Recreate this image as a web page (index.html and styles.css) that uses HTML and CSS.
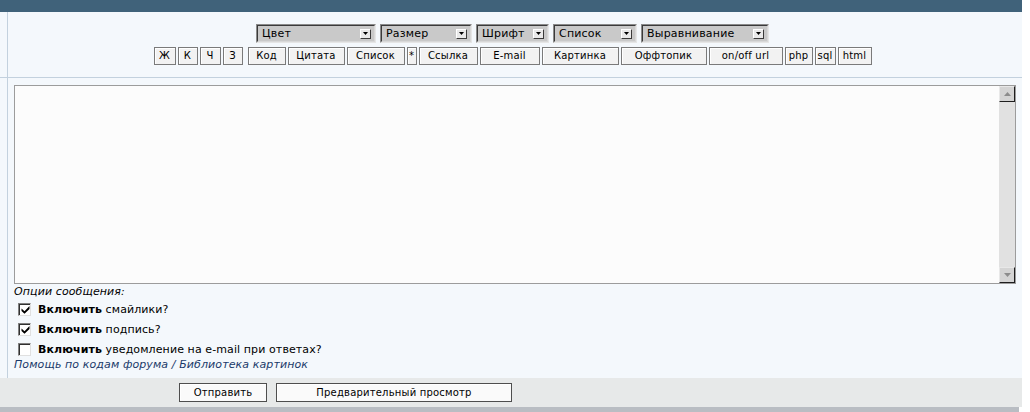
FILE: index.html
```html
<!DOCTYPE html>
<html lang="ru">
<head>
<meta charset="utf-8">
<title>Ответ</title>
<link rel="stylesheet" href="styles.css">
</head>
<body>
<div class="page">
  <div class="topbar"></div>
  <div class="row row-tools">
    <div class="side"></div>
    <div class="cell tools">
      <div class="selects">
        <div class="sel s-color"><div class="sel-in"><span class="sel-txt">Цвет</span><span class="arrow"><svg width="5" height="3" viewBox="0 0 5 3"><path d="M0 0H5L2.5 3Z" fill="#000"/></svg></span></div></div>
        <div class="sel s-size"><div class="sel-in"><span class="sel-txt">Размер</span><span class="arrow"><svg width="5" height="3" viewBox="0 0 5 3"><path d="M0 0H5L2.5 3Z" fill="#000"/></svg></span></div></div>
        <div class="sel s-font"><div class="sel-in"><span class="sel-txt">Шрифт</span><span class="arrow"><svg width="5" height="3" viewBox="0 0 5 3"><path d="M0 0H5L2.5 3Z" fill="#000"/></svg></span></div></div>
        <div class="sel s-list"><div class="sel-in"><span class="sel-txt">Список</span><span class="arrow"><svg width="5" height="3" viewBox="0 0 5 3"><path d="M0 0H5L2.5 3Z" fill="#000"/></svg></span></div></div>
        <div class="sel s-align"><div class="sel-in"><span class="sel-txt">Выравнивание</span><span class="arrow"><svg width="5" height="3" viewBox="0 0 5 3"><path d="M0 0H5L2.5 3Z" fill="#000"/></svg></span></div></div>
      </div>
      <div class="buttons">
        <button class="tb b-zh">Ж</button>
        <button class="tb b-k">К</button>
        <button class="tb b-ch">Ч</button>
        <button class="tb b-z">З</button>
        <button class="tb b-code">Код</button>
        <button class="tb b-quote">Цитата</button>
        <button class="tb b-list">Список</button>
        <button class="tb b-star">*</button>
        <button class="tb b-link">Ссылка</button>
        <button class="tb b-mail">E-mail</button>
        <button class="tb b-img">Картинка</button>
        <button class="tb b-off">Оффтопик</button>
        <button class="tb b-url">on/off url</button>
        <button class="tb b-php">php</button>
        <button class="tb b-sql">sql</button>
        <button class="tb b-html">html</button>
      </div>
    </div>
  </div>
  <div class="row row-body">
    <div class="side"></div>
    <div class="cell body">
      <div class="editor">
        <textarea class="text"></textarea>
        <div class="scroll">
          <div class="sbtn"><svg width="7" height="4" viewBox="0 0 7 4"><path d="M0 4H7L3.5 0Z" fill="#8c8c8c"/></svg></div>
          <div class="track"></div>
          <div class="sbtn"><svg width="7" height="4" viewBox="0 0 7 4"><path d="M0 0H7L3.5 4Z" fill="#8c8c8c"/></svg></div>
        </div>
      </div>
      <div class="opts-title">Опции сообщения:</div>
      <label class="opt"><span class="cb"><svg width="9" height="9" viewBox="0 0 9 9"><path d="M0.5 3.5L3.5 6.2L8.5 1V4L3.5 8.8L0.5 6Z" fill="#000"/></svg></span><b>Включить</b>&nbsp;смайлики?</label>
      <label class="opt"><span class="cb"><svg width="9" height="9" viewBox="0 0 9 9"><path d="M0.5 3.5L3.5 6.2L8.5 1V4L3.5 8.8L0.5 6Z" fill="#000"/></svg></span><b>Включить</b>&nbsp;подпись?</label>
      <label class="opt"><span class="cb"></span><b>Включить</b>&nbsp;уведомление на e-mail при ответах?</label>
      <div class="help"><a href="#">Помощь по кодам форума</a> / <a href="#">Библиотека картинок</a></div>
    </div>
  </div>
  <div class="footer">
    <button class="fb fb-send">Отправить</button>
    <button class="fb fb-prev">Предварительный просмотр</button>
  </div>
  <div class="strip"></div>
</div>
</body>
</html>
```

FILE: styles.css
```css
* { box-sizing: border-box; }
html, body { margin: 0; padding: 0; background: #ffffff; }
body {
  font-family: "DejaVu Sans", Verdana, sans-serif;
  font-size: 11px;
  color: #000;
}
.page { width: 1022px; }
.topbar { height: 12px; background: #40627a; }
.row { display: flex; background: #f4f8fc; }
.side { width: 8px; border-right: 1px solid #c3d1de; flex: none; }
.cell { flex: 1; }
.row-tools { height: 66px; border-bottom: 1px solid #c3d1de; }
.tools { padding: 12px 5px 0 0; display: flex; flex-direction: column; align-items: center; }
.selects { display: flex; gap: 4px; height: 19px; }
.sel {
  height: 19px;
  border: 1px solid; border-color: #8a8a8a #e6e6e6 #e6e6e6 #8a8a8a;
}
.sel-in {
  height: 17px;
  border: 1px solid; border-color: #3a3a3a #d8d8d8 #d8d8d8 #3a3a3a;
  background: #c9c9c9;
  display: flex; align-items: center; justify-content: space-between;
  padding: 0 3px 0 4px;
  font-size: 11px; line-height: 14px; letter-spacing: 0.2px;
}
.arrow {
  width: 11px; height: 10px;
  background: #e9e9e9;
  border: 1px solid; border-color: #ffffff #3a3a3a #3a3a3a #ffffff;
  display: flex; align-items: center; justify-content: center;
}
.arrow svg { display: block; }
.s-color { width: 120px; }
.s-size { width: 92px; }
.s-font { width: 73px; }
.s-list { width: 84px; }
.s-align { width: 128px; }

.buttons { display: flex; gap: 2px; margin-top: 4px; }
.tb {
  height: 18px; padding: 0;
  font-family: "DejaVu Sans", Verdana, sans-serif;
  font-size: 10px; line-height: 14px; color: #000; letter-spacing: 0.2px;
  background: #f2f2f2;
  border: 1px solid #7a7a7a;
  box-shadow: inset 1px 1px 0 #ffffff;
}
.b-zh { width: 22px; }
.b-k { width: 20px; }
.b-ch { width: 21px; }
.b-z { width: 20px; margin-right: 3px; }
.b-code { width: 38px; }
.b-quote { width: 57px; }
.b-list { width: 58px; }
.b-star { width: 10px; }
.b-link { width: 59px; }
.b-mail { width: 60px; }
.b-img { width: 77px; }
.b-off { width: 86px; }
.b-url { width: 74px; }
.b-php { width: 28px; }
.b-sql { width: 21px; }
.b-html { width: 34px; }

.row-body { height: 300px; }
.body { padding: 7px 6px 0 6px; }
.editor {
  height: 199px;
  border: 1px solid #9c9c9c;
  display: flex;
  background: #fcfcfc;
}
.text {
  flex: 1; border: 0; margin: 0; padding: 2px;
  background: #fcfcfc; resize: none; outline: none;
  font-family: "DejaVu Sans", Verdana, sans-serif; font-size: 11px;
}
.scroll { width: 16px; display: flex; flex-direction: column; background: #e1e1e1; }
.sbtn {
  height: 16px; flex: none;
  background: #d4d4d4;
  border: 1px solid; border-color: #e8e8e8 #1e1e1e #1e1e1e #e8e8e8;
  display: flex; align-items: center; justify-content: center;
}
.sbtn svg { display: block; }
.track { flex: 1; }

.opts-title { font-style: italic; line-height: 14px; margin-top: 1px; letter-spacing: 0.1px; }
.opt { display: flex; align-items: center; height: 20px; padding-left: 4px; letter-spacing: 0.1px; }
.opt b { font-weight: bold; }
.cb {
  width: 13px; height: 13px; margin-right: 7px;
  background: #ffffff;
  border: 1px solid; border-color: #808080 #e0e0e0 #e0e0e0 #808080;
  box-shadow: inset 1px 1px 0 #303030;
  display: flex; align-items: center; justify-content: center;
  padding: 1px 0 0 1px;
}
.cb svg { display: block; }
.help { font-style: italic; line-height: 12px; color: #1a3a6a; letter-spacing: 0.1px; }
.help a { color: #1a3a6a; text-decoration: none; }

.footer {
  height: 29px; background: #e7e9e9;
  display: flex; align-items: flex-start; gap: 9px;
  padding: 5px 0 0 179px;
}
.fb {
  height: 19px; padding: 0;
  font-family: "DejaVu Sans", Verdana, sans-serif;
  font-size: 10px; color: #000; letter-spacing: 0.2px;
  background: #fafafa;
  border: 1px solid #4e4e4e;
  box-shadow: inset 1px 1px 0 #ffffff;
}
.fb-send { width: 88px; }
.fb-prev { width: 236px; }
.strip { height: 6px; background: #b9bdc3; width: 1019px; }
```
